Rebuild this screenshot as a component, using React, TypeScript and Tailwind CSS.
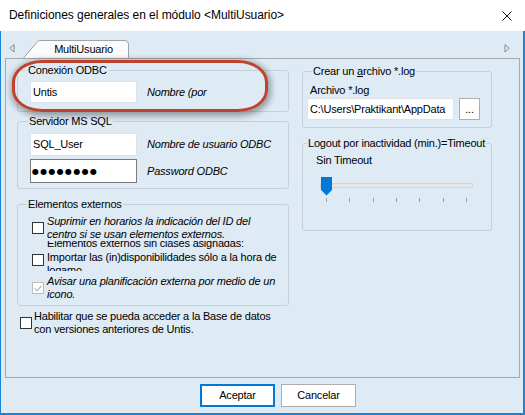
import React from "react";

const Check = ({ checked = false, disabled = false }: { checked?: boolean; disabled?: boolean }) => (
  <div
    className={
      disabled
        ? "w-[12px] h-[12px] shrink-0 bg-white border border-[#bcbcbc] flex items-center justify-center"
        : "w-[12px] h-[12px] shrink-0 bg-white border border-[#333333] flex items-center justify-center"
    }
  >
    {checked && (
      <svg width="8" height="7" viewBox="0 0 8 7">
        <path d="M0.6 3.4 L3 5.8 L7.4 0.8" fill="none" stroke="#a9a9a9" strokeWidth="1.1" />
      </svg>
    )}
  </div>
);

const Group = ({
  title,
  className = "",
  legendClass = "ml-[9px]",
  children,
}: {
  title: React.ReactNode;
  className?: string;
  legendClass?: string;
  children: React.ReactNode;
}) => (
  <fieldset className={"border border-[#c7d0d8] rounded-[3px] " + className}>
    <legend className={"px-[1px] leading-[13px] " + legendClass}>{title}</legend>
    {children}
  </fieldset>
);

export default function App() {
  return (
    <div className="relative w-[525px] h-[415px] flex flex-col overflow-hidden font-['Liberation_Sans',Arial,sans-serif] text-[11px] leading-[13px] tracking-[-0.2px] text-black">
      {/* Title bar */}
      <div className="h-[31px] shrink-0 bg-white flex items-center justify-between pl-[9px] pr-[13px]">
        <span className="text-[12px] tracking-[-0.05px]">Definiciones generales en el módulo &lt;MultiUsuario&gt;</span>
        <svg width="10" height="10" viewBox="0 0 10 10">
          <path d="M0.5 0.5 L9.5 9.5 M9.5 0.5 L0.5 9.5" stroke="#111" strokeWidth="1" />
        </svg>
      </div>

      {/* Body */}
      <div className="flex-1 flex flex-col bg-[#deeaf4] border-l border-r-2 border-b-2 border-[#1883d7]">
        {/* Tab strip */}
        <div className="h-[27px] shrink-0 flex items-end pl-[8px] pr-[13px]">
          <svg width="6" height="9" viewBox="0 0 6 9" className="mb-[5px]">
            <polygon points="5,0.5 5,8 0.8,4.25" fill="none" stroke="#8a8a8a" strokeWidth="1" />
          </svg>
          <div className="relative ml-[8px] w-[106px] h-[18px] flex items-center justify-center pl-[15px]">
            <svg width="106" height="18" viewBox="0 0 106 18" className="absolute left-0 top-0">
              <path
                d="M0.5 18 L14.5 1.6 Q15.4 0.5 17 0.5 L102 0.5 Q105.5 0.5 105.5 4 L105.5 18"
                fill="#f9fbfd"
                stroke="#a3a3a3"
                strokeWidth="1"
              />
            </svg>
            <span className="relative">MultiUsuario</span>
          </div>
          <div className="flex-1" />
          <svg width="6" height="9" viewBox="0 0 6 9" className="mb-[5px]">
            <polygon points="1,0.5 1,8 5.2,4.25" fill="none" stroke="#8a8a8a" strokeWidth="1" />
          </svg>
        </div>

        {/* Tab page */}
        <div className="ml-[4px] w-[515px] h-[320px] shrink-0 border border-[#a9a9a9] flex">
          {/* Left column */}
          <div className="ml-[11px] w-[272px] flex flex-col">
            <Group title="Conexión ODBC" className="mt-[5px]">
              <div className="flex items-center pl-[12px] pt-[4px] pb-[8px]">
                <div className="w-[107px] h-[22px] bg-white border border-[#dfe3e7] flex items-center pl-[2px]">Untis</div>
                <span className="ml-[10px] italic">Nombre (por</span>
              </div>
            </Group>

            <Group title="Servidor MS SQL" className="mt-[3px]" legendClass="ml-[10px]">
              <div className="flex flex-col gap-[3px] pl-[12px] pt-[5px] pb-[5px]">
                <div className="flex items-center">
                  <div className="w-[107px] h-[23px] bg-white border border-[#dfe3e7] flex items-center pl-[2px]">SQL_User</div>
                  <span className="ml-[10px] italic">Nombre de usuario ODBC</span>
                </div>
                <div className="flex items-center">
                  <div className="w-[107px] h-[24px] bg-white border border-[#7a7a7a] flex items-center pl-[1px] font-['DejaVu_Sans',sans-serif] text-[8px] tracking-[1.3px]">
                    ●●●●●●●●
                  </div>
                  <span className="ml-[10px] italic">Password ODBC</span>
                </div>
              </div>
            </Group>

            <Group title="Elementos externos" className="mt-[9px]">
              <div className="flex flex-col pt-[4px] pb-[4px]">
                <div className="flex items-center pl-[14px] gap-[3px] h-[26px]">
                  <Check />
                  <span className="italic whitespace-nowrap">
                    Suprimir en horarios la indicación del ID del
                    <br />
                    centro si se usan elementos externos.
                  </span>
                </div>
                <div className="h-[9px] overflow-hidden flex flex-col justify-end pl-[29px]">
                  <span className="whitespace-nowrap">Elementos externos sin clases asignadas:</span>
                </div>
                <div className="h-[20px] overflow-hidden flex items-start pl-[14px] gap-[3px] mt-[1px]">
                  <div className="mt-[3px]">
                    <Check />
                  </div>
                  <span className="whitespace-nowrap">
                    Importar las (in)disponibilidades sólo a la hora de
                    <br />
                    logamo
                  </span>
                </div>
                <div className="flex items-center pl-[14px] gap-[3px] h-[26px] mt-[4px]">
                  <Check checked disabled />
                  <span className="italic whitespace-nowrap">
                    Avisar una planificación externa por medio de un
                    <br />
                    icono.
                  </span>
                </div>
              </div>
            </Group>

            <div className="flex items-center gap-[2px] pl-[3px] mt-[4px] h-[26px]">
              <Check />
              <span className="whitespace-nowrap">
                Habilitar que se pueda acceder a la Base de datos
                <br />
                con versiones anteriores de Untis.
              </span>
            </div>
          </div>

          {/* Right column */}
          <div className="ml-[13px] w-[190px] flex flex-col">
            <Group
              title={
                <>
                  Crear un <span className="underline underline-offset-[1px]">a</span>rchivo *.log
                </>
              }
              className="mt-[6px]"
            >
              <div className="flex flex-col pt-[6px] pb-[7px] pl-[4px]">
                <span className="pl-[3px] h-[14px]">Archivo *.log</span>
                <div className="flex items-center gap-[5px]">
                  <div className="w-[147px] h-[22px] bg-white border border-[#dfe3e7] flex items-center pl-[2px] overflow-hidden whitespace-nowrap">
                    C:\Users\Praktikant\AppData
                  </div>
                  <div className="w-[21px] h-[22px] bg-white border border-[#adadad] flex items-center justify-center">
                    ...
                  </div>
                </div>
              </div>
            </Group>

            <Group title="Logout por inactividad (min.)=Timeout" className="mt-[9px]" legendClass="ml-[4px]">
              <div className="flex flex-col pt-[4px] pb-[28px] pl-[17px]">
                <span className="ml-[-4px] h-[13px]">Sin Timeout</span>
                <div className="relative w-[153px] h-[19px] mt-[10px]">
                  <div className="absolute left-0 right-0 top-[6px] h-[5px] bg-[#e7e7e7] border border-[#d4d4d4]" />
                  <svg width="11" height="19" viewBox="0 0 11 19" className="absolute left-[1px] top-0">
                    <path d="M0 0 H11 V13 L5.5 18.5 L0 13 Z" fill="#0078d7" />
                  </svg>
                </div>
                <div className="w-[153px] flex justify-between px-[6px] mt-[2px]">
                  <div className="w-[1px] h-[4px] bg-[#a0a0a0]" />
                  <div className="w-[1px] h-[4px] bg-[#a0a0a0]" />
                  <div className="w-[1px] h-[4px] bg-[#a0a0a0]" />
                  <div className="w-[1px] h-[4px] bg-[#a0a0a0]" />
                  <div className="w-[1px] h-[4px] bg-[#a0a0a0]" />
                  <div className="w-[1px] h-[4px] bg-[#a0a0a0]" />
                  <div className="w-[1px] h-[4px] bg-[#a0a0a0]" />
                </div>
              </div>
            </Group>
          </div>
        </div>

        {/* Buttons */}
        <div className="flex gap-[6px] pl-[199px] mt-[6px]">
          <button className="w-[75px] h-[23px] bg-white border border-[#0078d7] shadow-[inset_0_0_0_1px_#0078d7]">Aceptar</button>
          <button className="w-[75px] h-[23px] bg-white border border-[#adadad]">Cancelar</button>
        </div>
      </div>

      {/* Red annotation */}
      <div className="absolute left-[12px] top-[60px] w-[256px] h-[52px] border-[3px] border-[#c0422d] rounded-[30px/22px] shadow-[1px_2px_6px_2px_rgba(0,0,0,0.35)] pointer-events-none" />
    </div>
  );
}
